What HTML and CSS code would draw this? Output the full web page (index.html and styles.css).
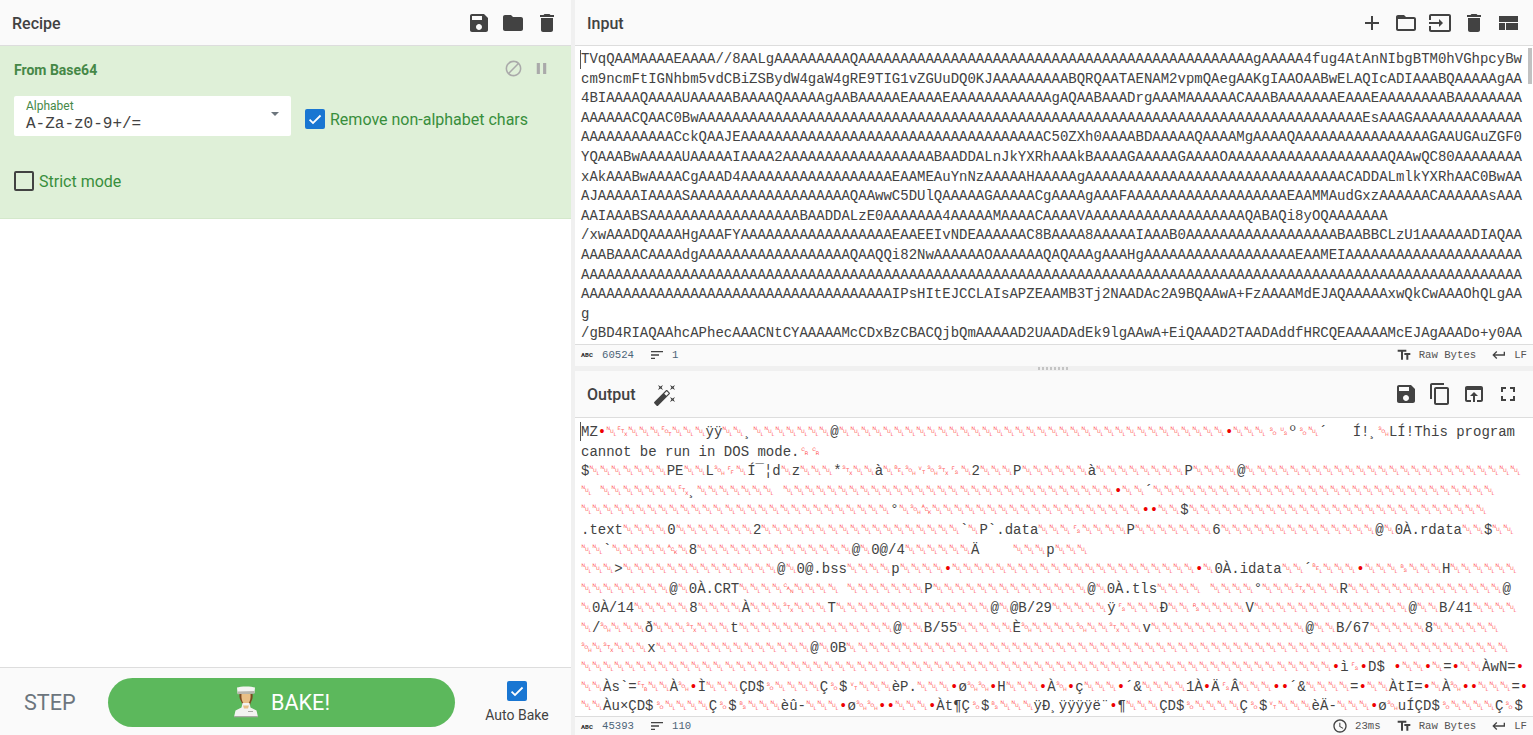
FILE: index.html
```html
<!DOCTYPE html>
<html lang="en">
<head>
<meta charset="utf-8">
<title>CyberChef</title>
<link rel="stylesheet" href="styles.css">
</head>
<body>
<div class="app">
  <section class="recipe">
    <header class="head">
      <h1 class="title">Recipe</h1>
      <div class="tools tools-recipe">
        <svg class="ic" viewBox="0 0 24 24"><path d="M17 3H5c-1.11 0-2 .9-2 2v14c0 1.1.89 2 2 2h14c1.1 0 2-.9 2-2V7l-4-4zm-5 16c-1.66 0-3-1.34-3-3s1.34-3 3-3 3 1.34 3 3-1.34 3-3 3zm3-10H5V5h10v4z"/></svg>
        <svg class="ic" viewBox="0 0 24 24"><path d="M10 4H4c-1.1 0-1.99.9-1.99 2L2 18c0 1.1.9 2 2 2h16c1.1 0 2-.9 2-2V8c0-1.1-.9-2-2-2h-8l-2-2z"/></svg>
        <svg class="ic" viewBox="0 0 24 24"><path d="M6 19c0 1.1.9 2 2 2h8c1.1 0 2-.9 2-2V7H6v12zM19 4h-3.5l-1-1h-5l-1 1H5v2h14V4z"/></svg>
      </div>
    </header>
    <div class="list">
      <div class="op">
        <div class="op-head">
          <span class="op-name">From Base64</span>
          <span class="op-tools">
            <svg class="ic-op" viewBox="0 0 24 24"><path d="M12 2C6.48 2 2 6.48 2 12s4.48 10 10 10 10-4.48 10-10S17.52 2 12 2zM4 12c0-4.42 3.58-8 8-8 1.85 0 3.55.63 4.9 1.69L5.69 16.9C4.63 15.55 4 13.85 4 12zm8 8c-1.85 0-3.55-.63-4.9-1.69L18.31 7.1C19.37 8.45 20 10.15 20 12c0 4.42-3.58 8-8 8z"/></svg>
            <svg class="ic-op" viewBox="0 0 24 24"><path d="M6 19h4V5H6v14zm8-14v14h4V5h-4z"/></svg>
          </span>
        </div>
        <div class="op-row">
          <div class="field">
            <span class="field-label">Alphabet</span>
            <span class="field-value">A-Za-z0-9+/=</span>
            <span class="caret"></span>
          </div>
          <label class="check"><span class="box on"><svg viewBox="0 0 24 24"><path d="M9 16.2 4.8 12l-1.9 1.9L9 20 21.3 7.7l-1.9-1.9z"/></svg></span>Remove non-alphabet chars</label>
        </div>
        <label class="check strict"><span class="box"></span>Strict mode</label>
      </div>
    </div>
    <footer class="controls">
      <span class="step">STEP</span>
      <button class="bake" type="button">
        <svg class="chef" viewBox="0 0 26 32">
          <path d="M4 1.500C7 0 19 0 22 1.500L21.500 7 4.500 7.500z" fill="#f4f4f2"/>
          <path d="M4.500 5.500 21.500 5 21.500 7.800 4.500 8.300z" fill="#b9b6ae"/>
          <path d="M6.500 8h13c.6 3-.2 6-1.500 8l-1 3H9.500l-1-3c-1.400-2-2.500-5-2-8z" fill="#7a4a22"/>
          <path d="M8.500 8h9c.5 5-1 10-4.500 11C9.500 18 8 13 8.500 8z" fill="#e9bf86"/>
          <path d="M9.500 17h7l1 4.500 6 3 1.500 6.500H1L2.500 24.500l6-3z" fill="#f3f3f1"/>
          <path d="M1 30h24v1.300H1zM15 25h5v1h-5z" fill="#a9a9a4"/>
          <path d="M10 19.500h6l-1 3h-4z" fill="#e9bf86"/>
        </svg>
        <span>BAKE!</span>
      </button>
      <div class="auto">
        <span class="box on"><svg viewBox="0 0 24 24"><path d="M9 16.2 4.8 12l-1.900 1.900L9 20 21.300 7.700l-1.900-1.900z"/></svg></span>
        <span class="auto-label">Auto Bake</span>
      </div>
    </footer>
  </section>
  <div class="vgutter"></div>
  <main class="io">
    <section class="pane">
      <header class="head">
        <h1 class="title">Input</h1>
        <div class="tools">
          <svg class="ic" viewBox="0 0 24 24"><path d="M19 13h-6v6h-2v-6H5v-2h6V5h2v6h6v2z"/></svg>
          <svg class="ic" viewBox="0 0 24 24"><path d="M20 6h-8l-2-2H4c-1.100 0-1.990.9-1.990 2L2 18c0 1.100.9 2 2 2h16c1.100 0 2-.9 2-2V8c0-1.100-.9-2-2-2zm0 12H4V8h16v10z"/></svg>
          <svg class="ic" viewBox="0 0 24 24"><path d="M21 3.010H3c-1.100 0-2 .9-2 2V9h2V4.990h18v14.030H3V15H1v4.010c0 1.100.9 1.980 2 1.980h18c1.100 0 2-.88 2-1.980v-14c0-1.110-.9-2-2-2zM11 16l4-4-4-4v3H1v2h10v3z"/></svg>
          <svg class="ic" viewBox="0 0 24 24"><path d="M6 19c0 1.100.9 2 2 2h8c1.100 0 2-.9 2-2V7H6v12zM19 4h-3.500l-1-1h-5l-1 1H5v2h14V4z"/></svg>
          <svg class="ic" viewBox="0 0 24 24"><path d="M3 19h6v-7H3v7zm7 0h12v-7H10v7zM3 5v6h19V5H3z"/></svg>
        </div>
      </header>
      <div class="text text-in">
        <div class="cursor"></div>
        <div class="line">TVqQAAMAAAAEAAAA//8AALgAAAAAAAAAQAAAAAAAAAAAAAAAAAAAAAAAAAAAAAAAAAAAAAAAAAAAAAAAgAAAAA4fug4AtAnNIbgBTM0hVGhpcyBw</div>
        <div class="line">cm9ncmFtIGNhbm5vdCBiZSBydW4gaW4gRE9TIG1vZGUuDQ0KJAAAAAAAAABQRQAATAENAM2vpmQAegAAKgIAAOAABwELAQIcADIAAABQAAAAAgAA</div>
        <div class="line">4BIAAAAQAAAAUAAAAABAAAAQAAAAAgAABAAAAAEAAAAEAAAAAAAAAAAAgAQAABAAADrgAAAMAAAAAACAAABAAAAAAAEAAAEAAAAAAAABAAAAAAAA</div>
        <div class="line">AAAAAACQAAC0BwAAAAAAAAAAAAAAAAAAAAAAAAAAAAAAAAAAAAAAAAAAAAAAAAAAAAAAAAAAAAAAAAAAAAAAAAAAAAAAAEsAAAGAAAAAAAAAAAAA</div>
        <div class="line">AAAAAAAAAAACckQAAJEAAAAAAAAAAAAAAAAAAAAAAAAAAAAAAAAAAAAC50ZXh0AAAABDAAAAAQAAAAMgAAAAQAAAAAAAAAAAAAAAAGAAUGAuZGF0</div>
        <div class="line">YQAAABwAAAAAUAAAAAIAAAA2AAAAAAAAAAAAAAAAAABAADDALnJkYXRhAAAkBAAAAGAAAAAGAAAAOAAAAAAAAAAAAAAAAAAAQAAwQC80AAAAAAAA</div>
        <div class="line">xAkAAABwAAAACgAAAD4AAAAAAAAAAAAAAAAAAEAAMEAuYnNzAAAAAHAAAAAgAAAAAAAAAAAAAAAAAAAAAAAAAAAAAAACADDALmlkYXRhAAC0BwAA</div>
        <div class="line">AJAAAAAIAAAASAAAAAAAAAAAAAAAAAAAQAAwwC5DUlQAAAAAGAAAAACgAAAAgAAAFAAAAAAAAAAAAAAAAAAAEAAMMAudGxzAAAAAACAAAAAAsAAA</div>
        <div class="line">AAIAAABSAAAAAAAAAAAAAAAAAABAADDALzE0AAAAAAA4AAAAAMAAAACAAAAVAAAAAAAAAAAAAAAAAAAQABAQi8yOQAAAAAAA</div>
        <div class="line">/xwAAADQAAAAHgAAAFYAAAAAAAAAAAAAAAAAAEAAEEIvNDEAAAAAAC8BAAAA8AAAAAIAAAB0AAAAAAAAAAAAAAAAAABAABBCLzU1AAAAAADIAQAA</div>
        <div class="line">AAABAAACAAAAdgAAAAAAAAAAAAAAAAAAQAAQQi82NwAAAAAAOAAAAAAQAQAAAgAAAHgAAAAAAAAAAAAAAAAAAEAAMEIAAAAAAAAAAAAAAAAAAAAA</div>
        <div class="line">AAAAAAAAAAAAAAAAAAAAAAAAAAAAAAAAAAAAAAAAAAAAAAAAAAAAAAAAAAAAAAAAAAAAAAAAAAAAAAAAAAAAAAAAAAAAAAAAAAAAAAAAAAAAAAAA</div>
        <div class="line">AAAAAAAAAAAAAAAAAAAAAAAAAAAAAAAAAAAAAIPsHItEJCCLAIsAPZEAAMB3Tj2NAADAc2A9BQAAwA+FzAAAAMdEJAQAAAAAxwQkCwAAAOhQLgAA</div>
        <div class="line">g</div>
        <div class="line">/gBD4RIAQAAhcAPhecAAACNtCYAAAAAMcCDxBzCBACQjbQmAAAAAD2UAADAdEk9lgAAwA+EiQAAAD2TAADAddfHRCQEAAAAAMcEJAgAAADo+y0AA</div>
      </div>
      <div class="scroll"></div>
      <footer class="status status-in">
        <span class="stat"><span class="abc">ABC</span><span class="num">60524</span></span>
        <span class="stat"><svg class="ic-s" viewBox="0 0 24 24"><path d="M3 18h6v-2H3v2zM3 6v2h18V6H3zm0 7h12v-2H3v2z"/></svg><span class="num">1</span></span>
        <span class="spacer"></span>
        <span class="stat"><svg class="ic-s" viewBox="0 0 24 24"><path d="M2.500 4v3h5v12h3V7h5V4h-13zm19 5h-9v3h3v7h3v-7h3V9z"/></svg><span class="meta">Raw Bytes</span></span>
        <span class="stat"><svg class="ic-s" viewBox="0 0 24 24"><path d="M19 7v4H5.830l3.580-3.590L8 6l-6 6 6 6 1.410-1.410L5.830 13H21V7z"/></svg><span class="meta">LF</span></span>
      </footer>
    </section>
    <div class="hgutter"><span class="grip"></span></div>
    <section class="pane">
      <header class="head head-out">
        <h1 class="title">Output</h1>
        <svg class="ic wand" viewBox="0 0 24 24"><path d="M7.500 5.600 10 7 8.600 4.500 10 2 7.500 3.400 5 2l1.400 2.500L5 7zm12 9.800L17 14l1.400 2.500L17 19l2.500-1.400L22 19l-1.400-2.500L22 14zM22 2l-2.500 1.400L17 2l1.400 2.500L17 7l2.500-1.400L22 7l-1.400-2.500zm-7.630 5.290c-.39-.39-1.020-.39-1.410 0L1.290 18.960c-.39.39-.39 1.020 0 1.410l2.340 2.340c.39.39 1.020.39 1.410 0L16.700 11.050c.39-.39.39-1.020 0-1.410l-2.330-2.350zm-1.030 5.490-2.120-2.120 2.440-2.440 2.120 2.120-2.440 2.440z"/></svg>
        <div class="tools tools-out">
          <svg class="ic" viewBox="0 0 24 24"><path d="M17 3H5c-1.110 0-2 .9-2 2v14c0 1.100.89 2 2 2h14c1.100 0 2-.9 2-2V7l-4-4zm-5 16c-1.660 0-3-1.340-3-3s1.340-3 3-3 3 1.340 3 3-1.340 3-3 3zm3-10H5V5h10v4z"/></svg>
          <svg class="ic" viewBox="0 0 24 24"><path d="M16 1H4c-1.100 0-2 .9-2 2v14h2V3h12V1zm3 4H8c-1.100 0-2 .9-2 2v14c0 1.100.9 2 2 2h11c1.100 0 2-.9 2-2V7c0-1.100-.9-2-2-2zm0 16H8V7h11v14z"/></svg>
          <svg class="ic" viewBox="0 0 24 24"><path d="M19 4H5c-1.110 0-2 .9-2 2v12c0 1.100.89 2 2 2h4v-2H5V8h14v10h-4v2h4c1.100 0 2-.9 2-2V6c0-1.100-.89-2-2-2zm-7 6-4 4h3v6h2v-6h3l-4-4z"/></svg>
          <svg class="ic" viewBox="0 0 24 24"><path d="M7 14H5v5h5v-2H7v-3zm-2-4h2V7h3V5H5v5zm12 7h-3v2h5v-5h-2v3zM14 5v2h3v3h2V5h-5z"/></svg>
        </div>
      </header>
      <div class="text text-out">
        <div class="cursor"></div>
        <div class="line">MZ<b>•</b><i>␀␃␀␀␀␄␀␀␀</i>ÿÿ<i>␀␀</i>¸<i>␀␀␀␀␀␀␀</i>@<i>␀␀␀␀␀␀␀␀␀␀␀␀␀␀␀␀␀␀␀␀␀␀␀␀␀␀␀␀␀␀␀␀␀␀␀</i><b>•</b><i>␀␀␀␎␟</i>º<i>␎␀</i>´   Í!¸<i>␁</i>LÍ!This program</div>
        <div class="line">cannot be run in DOS mode.<i>␍␍</i></div>
        <div class="line">$<i>␀␀␀␀␀␀␀</i>PE<i>␀␀</i>L<i>␁␌␀</i>Í¯¦d<i>␀</i>z<i>␀␀␀</i>*<i>␂␀␀</i>à<i>␀␇␁␋␁␂␜␀</i>2<i>␀␀␀</i>P<i>␀␀␀␀␀␀</i>à<i>␀␀␀␀␀␀␀␀</i>P<i>␀␀␀␀</i>@<i>␀␀␀␀␀␀␀␀␀␀␀␀␀␀␀␀␀␀␀␀␀␀␀␀␀</i></div>
        <div class="line"><i>␀</i> <i>␀␀␀␀␀␀␀␃</i>¸<i>␀␀␀␀␀␀␀</i> <i>␀␀␀␀␀␀␀␀␀␀␀␀␀␀␀␀␀␀␀␀␀␀␀␀␀␀␀␀␀␀</i><b>•</b><i>␀␀</i>´<i>␀␀␀␀␀␀␀␀␀␀␀␀␀␀␀␀␀␀␀␀␀␀␀␀␀␀␀␀␀␀␀</i></div>
        <div class="line"><i>␀␀␀␀␀␀␀␀␀␀␀␀␀␀␀␀␀␀␀␀␀␀␀␀␀␀␀␀</i>°<i>␀␁␆␀␀␀␀␀␀␀␀␀␀␀␀␀␀␀␀␀␀␀</i><b>••</b><i>␀␀</i>$<i>␀␀␀␀␀␀␀␀␀␀␀␀␀␀␀␀␀␀␀␀␀␀␀␀␀␀␀</i></div>
        <div class="line">.text<i>␀␀␀␀</i>0<i>␀␀␀␀␀␀␀</i>2<i>␀␀␀␀␀␀␀␀␀␀␀␀␀␀␀␀␀␀</i>`<i>␀</i>P`.data<i>␀␀␀␜␀␀␀␀</i>P<i>␀␀␀␀␀␀␀</i>6<i>␀␀␀␀␀␀␀␀␀␀␀␀␀␀</i>@<i>␀</i>0À.rdata<i>␀␀</i>$<i>␀␀</i></div>
        <div class="line"><i>␀␀</i>`<i>␀␀␀␀␀␆␀</i>8<i>␀␀␀␀␀␀␀␀␀␀␀␀␀␀</i>@<i>␀</i>0@/4<i>␀␀␀␀␀␀</i>Ä    <i>␀␀␀</i>p<i>␀␀␀</i></div>
        <div class="line"><i>␀␀␀</i>&gt;<i>␀␀␀␀␀␀␀␀␀␀␀␀␀␀</i>@<i>␀</i>0@.bss<i>␀␀␀␀</i>p<i>␀␀␀␀</i><b>•</b><i>␀␀␀␀␀␀␀␀␀␀␀␀␀␀␀␀␀␀␀␀␀␀</i><b>•</b><i>␀</i>0À.idata<i>␀␀</i>´<i>␇␀␀␀</i><b>•</b><i>␀␀␀␈␀␀␀</i>H<i>␀␀␀␀␀␀</i></div>
        <div class="line"><i>␀␀␀␀␀␀␀␀</i>@<i>␀</i>0À.CRT<i>␀␀␀␀␘␀␀␀␀</i> <i>␀␀␀␀␀␀␀</i>P<i>␀␀␀␀␀␀␀␀␀␀␀␀␀␀</i>@<i>␀</i>0À.tls<i>␀␀␀␀</i> <i>␀␀␀␀</i>°<i>␀␀␀␂␀␀␀</i>R<i>␀␀␀␀␀␀␀␀␀␀␀␀␀␀</i>@</div>
        <div class="line"><i>␀</i>0À/14<i>␀␀␀␀␀</i>8<i>␀␀␀␀</i>À<i>␀␀␀␂␀␀␀</i>T<i>␀␀␀␀␀␀␀␀␀␀␀␀␀␀</i>@<i>␀</i>@B/29<i>␀␀␀␀␀</i>ÿ<i>␜␀␀␀</i>Ð<i>␀␀␞␀␀␀␀</i>V<i>␀␀␀␀␀␀␀␀␀␀␀␀␀␀</i>@<i>␀␀</i>B/41<i>␀␀␀␀</i></div>
        <div class="line"><i>␀</i>/<i>␁␀␀␀</i>ð<i>␀␀␀␂␀␀␀</i>t<i>␀␀␀␀␀␀␀␀␀␀␀␀␀␀</i>@<i>␀␀</i>B/55<i>␀␀␀␀␀</i>È<i>␁␀␀␀␀␁␀␀␂␀␀</i>v<i>␀␀␀␀␀␀␀␀␀␀␀␀␀␀</i>@<i>␀␀</i>B/67<i>␀␀␀␀␀</i>8<i>␀␀␀␀␀␀</i></div>
        <div class="line"><i>␁␀␂␀␀␀</i>x<i>␀␀␀␀␀␀␀␀␀␀␀␀␀␀</i>@<i>␀</i>0B<i>␀␀␀␀␀␀␀␀␀␀␀␀␀␀␀␀␀␀␀␀␀␀␀␀␀␀␀␀␀␀␀␀␀␀␀␀␀␀␀␀␀␀␀␀␀␀␀␀␀␀␀␀␀␀␀␀␀␀␀␀</i></div>
        <div class="line"><i>␀␀␀␀␀␀␀␀␀␀␀␀␀␀␀␀␀␀␀␀␀␀␀␀␀␀␀␀␀␀␀␀␀␀␀␀␀␀␀␀␀␀␀␀␀␀␀␀␀␀␀␀␀␀␀␀␀␀␀␀␀␀␀␀␀␀␀␀</i><b>•</b>ì<i>␜</i><b>•</b>D$ <b>•</b><i>␀␀</i><b>•</b><i>␀</i>=<b>•</b><i>␀␀</i>ÀwN=<b>•</b></div>
        <div class="line"><i>␀␀</i>Às`=<i>␗␀␀</i>À<i>␁</i><b>•</b>Ì<i>␀␀␀</i>ÇD$<i>␎␀␀␀␀</i>Ç<i>␎</i>$<i>␋␀␀␀</i>èP.<i>␀␀␀</i><b>•</b>ø<i>␁␁</i><b>•</b>H<i>␀␀␀</i><b>•</b>À<i>␁</i><b>•</b>ç<i>␀␀␀</i><b>•</b>´&amp;<i>␀␀␀␀</i>1À<b>•</b>Ä<i>␜</i>Â<i>␀␀␀</i><b>••</b>´&amp;<i>␀␀␀␀</i>=<b>•</b><i>␀␀</i>ÀtI=<b>•</b><i>␀</i>À<i>␁</i><b>••</b><i>␀␀␀</i>=<b>•</b></div>
        <div class="line"><i>␀␀</i>Àu×ÇD$<i>␎␀␀␀␀</i>Ç<i>␎</i>$<i>␈␀␀␀</i>èû-<i>␀␀␀</i><b>•</b>ø<i>␁␁</i><b>••</b><i>␀␀␀</i><b>•</b>Àt¶Ç<i>␎</i>$<i>␈␀␀␀</i>ÿÐ¸ÿÿÿÿë¨<b>•</b>¶<i>␀␀␀</i>ÇD$<i>␎␀␀␀␀</i>Ç<i>␎</i>$<i>␋␀␀␀</i>èÄ-<i>␀␀␀</i><b>•</b>ø<i>␁</i>uÍÇD$<i>␎␀␀␀␀</i>Ç<i>␎</i>$</div>
      </div>
      <footer class="status status-out">
        <span class="stat"><span class="abc">ABC</span><span class="num">45393</span></span>
        <span class="stat"><svg class="ic-s" viewBox="0 0 24 24"><path d="M3 18h6v-2H3v2zM3 6v2h18V6H3zm0 7h12v-2H3v2z"/></svg><span class="num">110</span></span>
        <span class="spacer"></span>
        <span class="stat"><svg class="ic-s" viewBox="0 0 24 24"><path d="M11.990 2C6.470 2 2 6.480 2 12s4.470 10 9.990 10C17.520 22 22 17.520 22 12S17.520 2 11.990 2zM12 20c-4.420 0-8-3.580-8-8s3.580-8 8-8 8 3.580 8 8-3.580 8-8 8zm.5-13H11v6l5.250 3.150.75-1.230-4.500-2.670z"/></svg><span class="meta">23ms</span></span>
        <span class="stat"><svg class="ic-s" viewBox="0 0 24 24"><path d="M2.500 4v3h5v12h3V7h5V4h-13zm19 5h-9v3h3v7h3v-7h3V9z"/></svg><span class="meta">Raw Bytes</span></span>
        <span class="stat"><svg class="ic-s" viewBox="0 0 24 24"><path d="M19 7v4H5.830l3.580-3.590L8 6l-6 6 6 6 1.410-1.410L5.830 13H21V7z"/></svg><span class="meta">LF</span></span>
      </footer>
    </section>
  </main>
</div>
</body>
</html>
```
FILE: styles.css
```css
* { box-sizing: border-box; }
html, body { margin: 0; height: 100%; overflow: hidden; background: #fff; }
body { font-family: Roboto, "Liberation Sans", sans-serif; color: #424242; }

.app { display: grid; grid-template-columns: 571px 4px 1fr; height: 735px; }
.vgutter { background: #f0f0f0; }

.recipe { display: flex; flex-direction: column; height: 735px; }
.head { height: 46px; flex: none; display: flex; align-items: center; justify-content: space-between; background: #fafafa; border-bottom: 1px solid #ddd; padding: 1px 0 0 12px; }
.title { margin: 0; font-size: 16px; font-weight: 500; color: #424242; }
.tools { display: flex; gap: 10px; padding-right: 13px; margin-top: -1px; }
.tools-recipe { padding-right: 12px; }
.ic { width: 24px; height: 24px; fill: #424242; flex: none; display: block; }

.list { flex: 1; background: #fff; }
.op { height: 173px; background: #dff0d8; border-bottom: 1px solid #d4e8cb; padding: 14px 14px 0; }
.op-head { display: flex; justify-content: space-between; align-items: center; height: 20px; }
.op-name { font-size: 14px; font-weight: 700; color: #468847; }
.op-tools { display: flex; gap: 9px; padding-right: 6px; margin-top: -3px; }
.ic-op { width: 19px; height: 19px; fill: #aaa; display: block; }
.op-row { display: flex; align-items: flex-start; gap: 14px; margin-top: 16px; }
.field { position: relative; width: 277px; height: 40px; background: #fff; border-radius: 2px; padding: 3px 12px 0; display: flex; flex-direction: column; }
.field-label { font-size: 12px; line-height: 14px; color: #468847; }
.field-value { font-family: "Liberation Mono", monospace; font-size: 16px; line-height: 18px; margin-top: 2px; color: #424242; }
.caret { position: absolute; right: 12px; top: 16px; border: 4px solid transparent; border-top: 4px solid #6c757d; border-bottom: 0; }
.check { display: flex; align-items: center; gap: 5px; font-size: 16px; color: #388e3c; }
.op-row .check { margin-top: 13px; }
.box { width: 20px; height: 20px; flex: none; border: 2px solid #424242; border-radius: 2px; display: block; }
.box.on { background: #1976d2; border: 0; }
.box.on svg { width: 16px; height: 16px; margin: 2px; display: block; fill: #fff; }
.strict { margin-top: 35px; }

.controls { height: 68px; flex: none; display: flex; align-items: center; background: #fafafa; border-top: 1px solid #ddd; padding-top: 1px; }
.step { width: 108px; padding-left: 24px; font-size: 21.6px; color: #6c757d; }
.bake { width: 347px; height: 49px; border: 0; border-radius: 25px; background: #5cb85c; color: #fff; font: 400 21.6px Roboto, sans-serif; display: flex; align-items: center; justify-content: center; gap: 12px; padding: 0; }
.chef { width: 26px; height: 32px; flex: none; }
.auto { flex: 1; display: flex; flex-direction: column; align-items: center; gap: 6px; padding: 0 0 1px 8px; }
.auto-label { font-size: 14px; color: #424242; }

.io { display: flex; flex-direction: column; height: 735px; min-width: 0; }
.pane { position: relative; display: flex; flex-direction: column; min-height: 0; }
.tools-out { margin-left: auto; }
.head-out { height: 47px; justify-content: flex-start; }
.wand { margin-left: 18px; }

.text { position: relative; height: 298px; overflow: hidden; padding: 4px 0 0 6px; font-family: "Liberation Mono", monospace; font-size: 14px; line-height: 19.6px; color: #424242; background: #fff; }
.line { height: 19.6px; white-space: pre; }
.line i { font-style: normal; color: #ff3b3b; font-family: "DejaVu Sans", monospace; font-size: 13.6px; line-height: 19.6px; letter-spacing: .04px; }
.line b { font-weight: 400; color: #e00; }
.cursor { position: absolute; left: 5px; top: 4px; width: 1px; height: 19px; background: #555; }
.scroll { position: absolute; right: 1px; top: 48px; width: 4px; height: 36px; background: #c1c1c1; }

.status { flex: none; display: flex; align-items: center; gap: 15px; background: #fafafa; border-top: 1px solid #ddd; padding: 0 6px; font-family: "Liberation Mono", monospace; font-size: 10.67px; }
.status-in { height: 22px; padding-bottom: 2px; }
.status-out { height: 19px; }
.spacer { flex: 1; }
.stat { display: flex; align-items: center; gap: 7px; }
.abc { font-family: Roboto, sans-serif; font-size: 6px; font-weight: 900; width: 14px; color: #333; }
.ic-s { width: 16px; height: 16px; fill: #424242; flex: none; }
.num { color: #4d6478; }
.meta { color: #555; }

.hgutter { height: 5px; flex: none; background: #f0f0f0; display: flex; justify-content: center; align-items: center; }
.grip { width: 32px; height: 3px; background: repeating-linear-gradient(90deg, #c4c4c4 0 2px, transparent 2px 4px); }
```
